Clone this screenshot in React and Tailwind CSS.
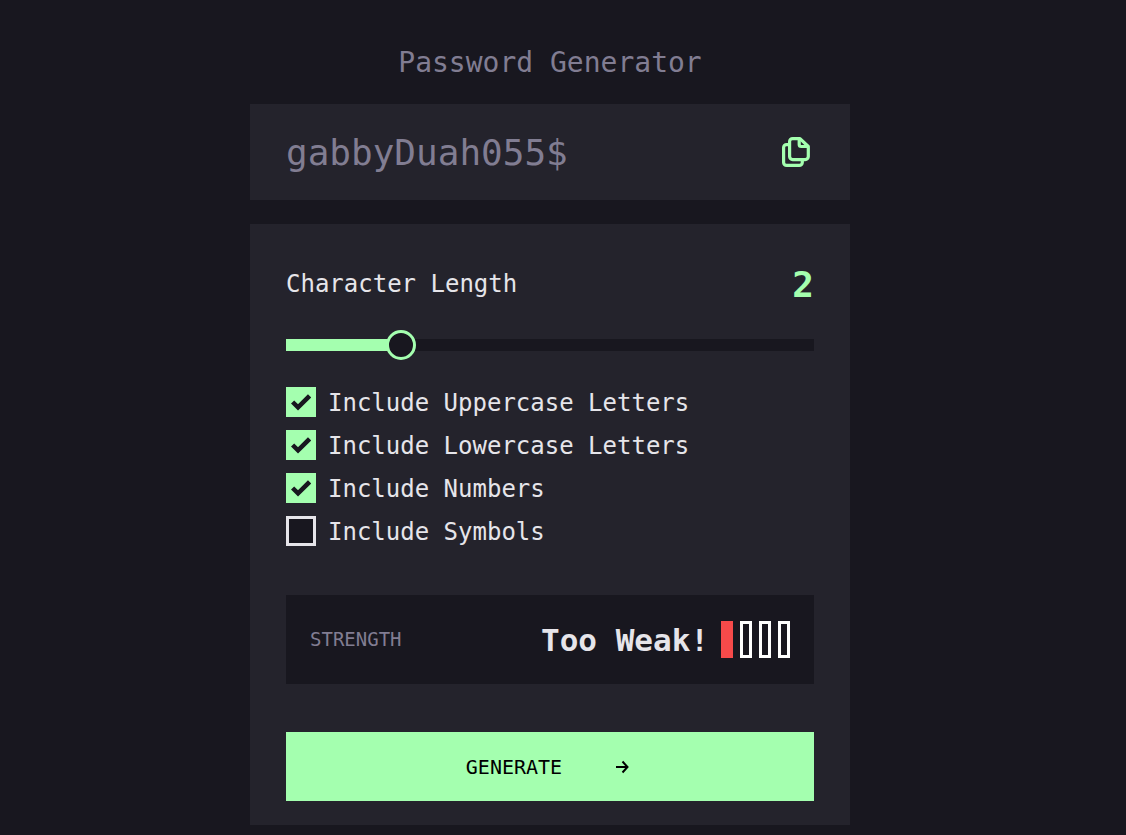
import { useState } from "react";

const OPTIONS = [
  { id: "uppercase", label: "Include Uppercase Letters", checked: true },
  { id: "lowercase", label: "Include Lowercase Letters", checked: true },
  { id: "numbers", label: "Include Numbers", checked: true },
  { id: "symbols", label: "Include Symbols", checked: false },
];

const MAX_LENGTH = 10;

function CopyIcon() {
  return (
    <svg width="28" height="30" viewBox="0 0 28 30" fill="none" stroke="currentColor" strokeWidth="3.2" strokeLinejoin="round" aria-hidden="true">
      <path d="M18 1.6H10.600a3 3 0 0 0-3 3v15a3 3 0 0 0 3 3h12.700a3 3 0 0 0 3-3V9.500z" />
      <path d="M17.200 2v5.500a2 2 0 0 0 2 2h7" />
      <path d="M7.600 7.600h-3a3 3 0 0 0-3 3v14.800a3 3 0 0 0 3 3h12.700a3 3 0 0 0 3-3v-3" />
    </svg>
  );
}

function CheckOption({ id, label, checked }) {
  return (
    <div className="flex items-center gap-3">
      <div className="grid size-[30px] place-items-center">
        <input
          id={id}
          type="checkbox"
          defaultChecked={checked}
          className="peer col-start-1 row-start-1 size-[30px] appearance-none border-3 border-[#e6e5ea] bg-[#18171f] checked:border-[#a4ffaf] checked:bg-[#a4ffaf]"
        />
        <svg
          width="20"
          height="18"
          viewBox="0 0 12.5 11.2"
          aria-hidden="true"
          className="pointer-events-none invisible col-start-1 row-start-1 peer-checked:visible"
        >
          <path d="M1 5.607 4.393 9l7.200-7.200" fill="none" stroke="#18171f" strokeWidth="2.8" />
        </svg>
      </div>
      <label htmlFor={id} className="pt-0.5 text-2xl leading-7">
        {label}
      </label>
    </div>
  );
}

function StrengthMeter() {
  return (
    <div className="mt-[49px] flex items-center justify-between bg-[#18171f] px-6 py-[26px]">
      <p className="text-[19px] text-[#817d92]">STRENGTH</p>
      <div className="flex items-center gap-3">
        <p className="text-[31px] leading-9 font-bold">Too Weak!</p>
        <div className="flex gap-[7px]">
          <span className="h-[37px] w-3 bg-[#f64a4a]" />
          <span className="h-[37px] w-3 border-3 border-white" />
          <span className="h-[37px] w-3 border-3 border-white" />
          <span className="h-[37px] w-3 border-3 border-white" />
        </div>
      </div>
    </div>
  );
}

export default function App() {
  const [length, setLength] = useState(2);
  const ratio = length / MAX_LENGTH;

  return (
    <div className="min-h-screen bg-[#18171f] pt-11 pr-[26px] pb-2.5 font-['DejaVu_Sans_Mono','Liberation_Mono',monospace] text-[#e6e5ea]">
      <main className="mx-auto w-full max-w-[600px]">
        <h1 className="text-center text-[28px] leading-[38px] text-[#817d92]">Password Generator</h1>

        <div className="mt-[22px] flex h-24 items-center justify-between gap-4 bg-[#24232c] pr-10 pl-9">
          <input
            type="text"
            readOnly
            aria-label="Generated password"
            value="gabbyDuah055$"
            className="min-w-0 flex-1 bg-transparent pt-0.5 text-4xl text-[#817d92] outline-none"
          />
          <button type="button" aria-label="Copy password" className="text-[#a4ffaf]">
            <CopyIcon />
          </button>
        </div>

        <section className="mt-6 bg-[#24232c] px-9 pt-9 pb-6">
          <div className="flex h-12 items-center justify-between">
            <label htmlFor="length" className="text-2xl">
              Character Length
            </label>
            <output htmlFor="length" className="pt-0.5 text-4xl font-bold text-[#a4ffaf]">
              {length}
            </output>
          </div>

          <input
            id="length"
            type="range"
            min="0"
            max={MAX_LENGTH}
            value={length}
            onChange={(e) => setLength(Number(e.target.value))}
            style={{ "--fill": `${ratio * 100}%` }}
            className="mt-[22px] block h-[30px] w-full appearance-none bg-transparent [&::-webkit-slider-runnable-track]:h-3 [&::-webkit-slider-runnable-track]:bg-[linear-gradient(to_right,#a4ffaf_var(--fill),#18171f_var(--fill))] [&::-webkit-slider-thumb]:-mt-[9px] [&::-webkit-slider-thumb]:size-[30px] [&::-webkit-slider-thumb]:appearance-none [&::-webkit-slider-thumb]:rounded-full [&::-webkit-slider-thumb]:border-3 [&::-webkit-slider-thumb]:border-solid [&::-webkit-slider-thumb]:border-[#a4ffaf] [&::-webkit-slider-thumb]:bg-[#18171f]"
          />

          <div className="mt-[27px] flex flex-col gap-[13px]">
            {OPTIONS.map((option) => (
              <CheckOption key={option.id} {...option} />
            ))}
          </div>

          <StrengthMeter />

          <button
            type="button"
            className="mt-12 flex h-[69px] w-full items-center justify-center gap-12 bg-[#a4ffaf] text-xl text-black"
          >
            GENERATE
            <svg width="24" height="24" viewBox="0 0 24 24" fill="none" stroke="currentColor" strokeWidth="2" aria-hidden="true">
              <path d="M6 12h11.500M12.500 6.500l5 5.500-5 5.500" />
            </svg>
          </button>
        </section>
      </main>
    </div>
  );
}
